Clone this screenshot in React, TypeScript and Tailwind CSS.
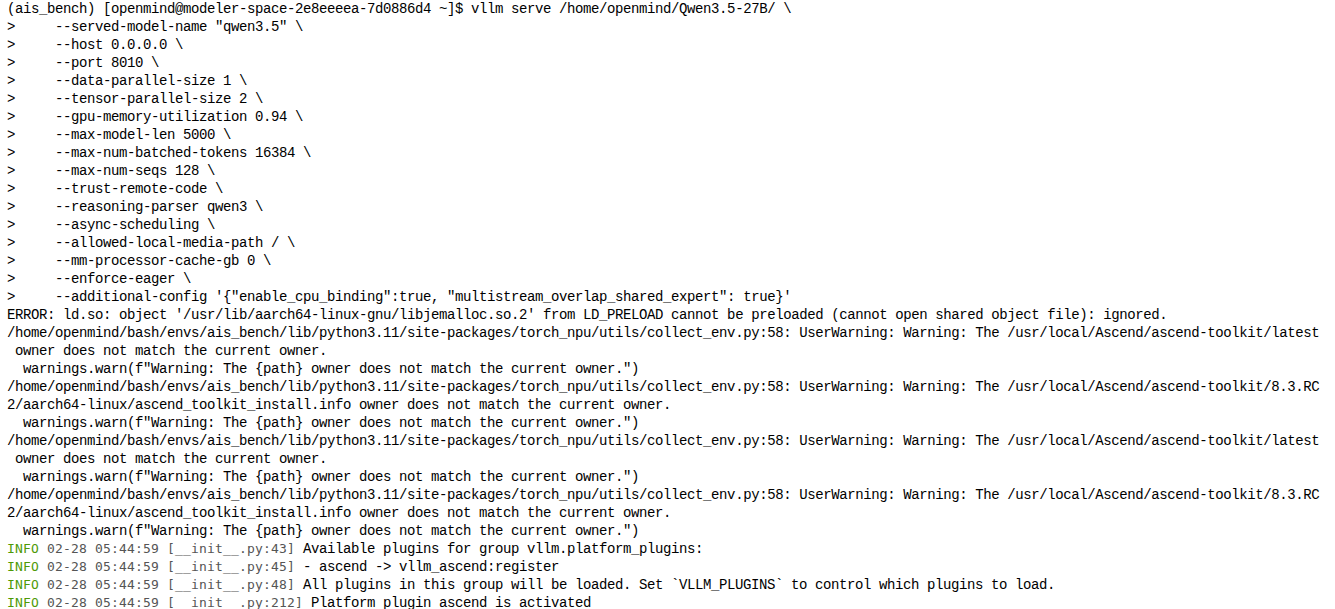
const SITE =
  '/home/openmind/bash/envs/ais_bench/lib/python3.11/site-packages/torch_npu/utils/collect_env.py:58: UserWarning: Warning: The '
const WARN = '  warnings.warn(f"Warning: The {path} owner does not match the current owner.")'

type Line = { text: string; info?: { tag: string; rest: string } }

const args = [
  '--served-model-name "qwen3.5" \\',
  '--host 0.0.0.0 \\',
  '--port 8010 \\',
  '--data-parallel-size 1 \\',
  '--tensor-parallel-size 2 \\',
  '--gpu-memory-utilization 0.94 \\',
  '--max-model-len 5000 \\',
  '--max-num-batched-tokens 16384 \\',
  '--max-num-seqs 128 \\',
  '--trust-remote-code \\',
  '--reasoning-parser qwen3 \\',
  '--async-scheduling \\',
  '--allowed-local-media-path / \\',
  '--mm-processor-cache-gb 0 \\',
  '--enforce-eager \\',
  `--additional-config '{"enable_cpu_binding":true, "multistream_overlap_shared_expert": true}'`,
]

const latest = [
  { text: SITE + '/usr/local/Ascend/ascend-toolkit/latest' },
  { text: ' owner does not match the current owner.' },
  { text: WARN },
]
const rc = [
  { text: SITE + '/usr/local/Ascend/ascend-toolkit/8.3.RC' },
  { text: '2/aarch64-linux/ascend_toolkit_install.info owner does not match the current owner.' },
  { text: WARN },
]

const info = (file: string, rest: string): Line => ({
  text: '',
  info: { tag: `02-28 05:44:59 [__init__.py:${file}]`, rest },
})

const lines: Line[] = [
  { text: '(ais_bench) [openmind@modeler-space-2e8eeeea-7d0886d4 ~]$ vllm serve /home/openmind/Qwen3.5-27B/ \\' },
  ...args.map((a) => ({ text: '>     ' + a })),
  {
    text: "ERROR: ld.so: object '/usr/lib/aarch64-linux-gnu/libjemalloc.so.2' from LD_PRELOAD cannot be preloaded (cannot open shared object file): ignored.",
  },
  ...latest,
  ...rc,
  ...latest,
  ...rc,
  info('43', ' Available plugins for group vllm.platform_plugins:'),
  info('45', ' - ascend -> vllm_ascend:register'),
  info('48', ' All plugins in this group will be loaded. Set `VLLM_PLUGINS` to control which plugins to load.'),
  info('212', ' Platform plugin ascend is activated'),
]

export default function App() {
  return (
    <div className="w-[1335px] h-[609px] overflow-hidden bg-white">
      <div className="pl-[7px] font-['Liberation_Mono',monospace] text-[14px] tracking-[-0.4px] text-black">
        {lines.map((l, i) => (
          <div key={i} className="h-[18px] leading-[18px] whitespace-pre">
            {l.info ? (
              <>
                <span className="font-['DejaVu_Sans_Mono',monospace] text-[13px] tracking-[0.17px] text-[#4e9a06]">
                  INFO
                </span>
                <span className="font-['DejaVu_Sans_Mono',monospace] text-[13px] tracking-[0.17px] text-[#555555]">
                  {' ' + l.info.tag}
                </span>
                {l.info.rest}
              </>
            ) : (
              l.text
            )}
          </div>
        ))}
      </div>
    </div>
  )
}
